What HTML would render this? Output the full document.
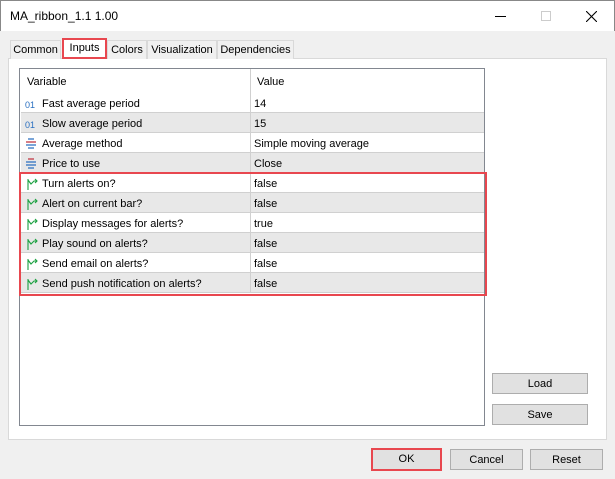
<!DOCTYPE html><html><head><style>
*{margin:0;padding:0;box-sizing:border-box}
body{width:615px;height:479px;background:#f0f0f0;font-family:"Liberation Sans",sans-serif;font-size:11px;color:#000;position:relative;overflow:hidden}
.abs{position:absolute}
.title{left:0;top:0;width:615px;height:31px;background:#fff;border:1px solid #888;border-bottom:none}
.tab{top:40px;height:19px;border:1px solid #d9d9d9;border-bottom:none;background:#f0f0f0;line-height:19px;text-align:center}
.panel{left:8px;top:58px;width:599px;height:382px;background:#fff;border:1px solid #d9d9d9}
.list{left:19px;top:68px;width:466px;height:358px;border:1px solid #828790;background:#fff}
.row{position:absolute;left:1px;width:463px;height:20px;border-bottom:1px solid #d0d0d0;line-height:22px}
.row.g{background:#e8e8e8}
.row .n{position:absolute;left:21px}
.row .v{position:absolute;left:229px;padding-left:3px;border-left:1px solid #d0d0d0;height:20px;top:0}
.ic{position:absolute;left:4px;top:4px}
.btn{background:#e1e1e1;border:1px solid #adadad;text-align:center;line-height:21px;height:21px}
</style></head><body>
<div class="abs title"><span class="abs" style="left:9px;top:8px;font-size:12px">MA_ribbon_1.1 1.00</span>
<div class="abs" style="left:494px;top:15px;width:11px;height:1px;background:#000"></div>
<div class="abs" style="left:540px;top:10px;width:10px;height:10px;border:1px solid #ccc"></div>
<svg class="abs" style="left:585px;top:10px" width="11" height="11"><path d="M0 0L11 11M11 0L0 11" stroke="#000" stroke-width="1.1"/></svg>
</div>
<div class="abs panel"></div>
<div class="abs tab" style="left:10px;width:51px">Common</div>
<div class="abs tab" style="left:62px;top:38px;height:21px;width:45px;background:#fff;border:2px solid #e8474f;line-height:17px">Inputs</div>
<div class="abs tab" style="left:107px;width:40px">Colors</div>
<div class="abs tab" style="left:147px;width:70px">Visualization</div>
<div class="abs tab" style="left:217px;width:77px">Dependencies</div>
<div class="abs list">
<div class="row" style="top:0;height:24px;line-height:26px;border-bottom:none"><span class="abs" style="left:6px">Variable</span><span class="v" style="height:24px">&nbsp;Value</span></div>
<div class="row" style="top:24px"><span class="ic" style="color:#2a6fc0;font-size:9px;top:1px;left:4px">01</span><span class="n">Fast average period</span><span class="v">14</span></div>
<div class="row g" style="top:44px"><span class="ic" style="color:#2a6fc0;font-size:9px;top:1px;left:4px">01</span><span class="n">Slow average period</span><span class="v">15</span></div>
<div class="row" style="top:64px"><svg class="ic" width="12" height="12"><path d="M3 2h6M1 5h10M1 8h10M3 11h6" stroke="#2a6fc0" stroke-width="1.2"/><path d="M1 5h10" stroke="#e04040" stroke-width="1.2"/></svg><span class="n">Average method</span><span class="v">Simple moving average</span></div>
<div class="row g" style="top:84px"><svg class="ic" width="12" height="12"><path d="M3 2h6M1 5h10M1 8h10M3 11h6" stroke="#2a6fc0" stroke-width="1.2"/><path d="M3 2h6" stroke="#e04040" stroke-width="1.2"/></svg><span class="n">Price to use</span><span class="v">Close</span></div>
<div class="row" style="top:104px"><svg class="ic" width="14" height="14"><path d="M3 13V2M3 3l3 4 3-3 3 0M10 2l2 2-2 2" stroke="#1aa040" stroke-width="1.1" fill="none"/></svg><span class="n">Turn alerts on?</span><span class="v">false</span></div>
<div class="row g" style="top:124px"><svg class="ic" width="14" height="14"><path d="M3 13V2M3 3l3 4 3-3 3 0M10 2l2 2-2 2" stroke="#1aa040" stroke-width="1.1" fill="none"/></svg><span class="n">Alert on current bar?</span><span class="v">false</span></div>
<div class="row" style="top:144px"><svg class="ic" width="14" height="14"><path d="M3 13V2M3 3l3 4 3-3 3 0M10 2l2 2-2 2" stroke="#1aa040" stroke-width="1.1" fill="none"/></svg><span class="n">Display messages for alerts?</span><span class="v">true</span></div>
<div class="row g" style="top:164px"><svg class="ic" width="14" height="14"><path d="M3 13V2M3 3l3 4 3-3 3 0M10 2l2 2-2 2" stroke="#1aa040" stroke-width="1.1" fill="none"/></svg><span class="n">Play sound on alerts?</span><span class="v">false</span></div>
<div class="row" style="top:184px"><svg class="ic" width="14" height="14"><path d="M3 13V2M3 3l3 4 3-3 3 0M10 2l2 2-2 2" stroke="#1aa040" stroke-width="1.1" fill="none"/></svg><span class="n">Send email on alerts?</span><span class="v">false</span></div>
<div class="row g" style="top:204px"><svg class="ic" width="14" height="14"><path d="M3 13V2M3 3l3 4 3-3 3 0M10 2l2 2-2 2" stroke="#1aa040" stroke-width="1.1" fill="none"/></svg><span class="n">Send push notification on alerts?</span><span class="v">false</span></div>
</div>
<div class="abs" style="left:19px;top:172px;width:468px;height:124px;border:2px solid #e8474f"></div>
<div class="abs btn" style="left:492px;top:373px;width:96px">Load</div>
<div class="abs btn" style="left:492px;top:404px;width:96px">Save</div>
<div class="abs btn" style="left:371px;top:448px;width:71px;height:23px;border:2px solid #e8474f;line-height:19px">OK</div>
<div class="abs btn" style="left:450px;top:449px;width:73px">Cancel</div>
<div class="abs btn" style="left:530px;top:449px;width:73px">Reset</div>
</body></html>
